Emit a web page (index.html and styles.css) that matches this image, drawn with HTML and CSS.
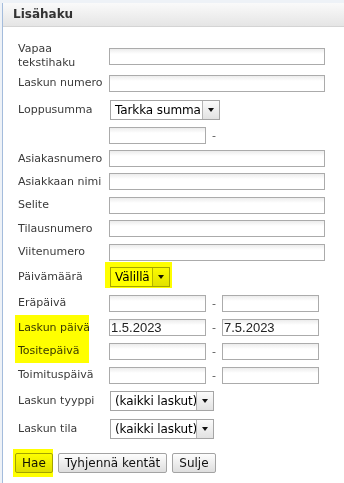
FILE: index.html
```html
<!DOCTYPE html>
<html lang="fi">
<head>
  <meta charset="UTF-8">
  <title>Lisähaku</title>
  <link rel="stylesheet" href="styles.css">
</head>
<body>

  <div class="page">
    <div class="dialog">
      <div class="dialog-title">Lisähaku</div>

      <div class="search">
        <label>Vapaa<br>tekstihaku</label>
        <div class="field"><input type="text" class="wide"></div>

        <label>Laskun numero</label>
        <div class="field"><input type="text" class="wide"></div>

        <label>Loppusumma</label>
        <div class="field"><div class="select sel-sum"><span>Tarkka summa</span><i></i></div></div>

        <span></span>
        <div class="field"><input type="text" class="short"><span class="dash">-</span></div>

        <label>Asiakasnumero</label>
        <div class="field"><input type="text" class="wide"></div>

        <label>Asiakkaan nimi</label>
        <div class="field"><input type="text" class="wide"></div>

        <label>Selite</label>
        <div class="field"><input type="text" class="wide"></div>

        <label>Tilausnumero</label>
        <div class="field"><input type="text" class="wide"></div>

        <label>Viitenumero</label>
        <div class="field"><input type="text" class="wide"></div>

        <label>Päivämäärä</label>
        <div class="field"><div class="select sel-range"><span>Välillä</span><i></i></div></div>

        <label>Eräpäivä</label>
        <div class="field"><input type="text" class="short"><span class="dash">-</span><input type="text" class="short"></div>

        <label>Laskun päivä</label>
        <div class="field"><input type="text" class="short" value="1.5.2023"><span class="dash">-</span><input type="text" class="short" value="7.5.2023"></div>

        <label>Tositepäivä</label>
        <div class="field"><input type="text" class="short"><span class="dash">-</span><input type="text" class="short"></div>

        <label>Toimituspäivä</label>
        <div class="field"><input type="text" class="short"><span class="dash">-</span><input type="text" class="short"></div>

        <label>Laskun tyyppi</label>
        <div class="field"><div class="select sel-all"><span>(kaikki laskut)</span><i></i></div></div>

        <label>Laskun tila</label>
        <div class="field"><div class="select sel-all"><span>(kaikki laskut)</span><i></i></div></div>
      </div>

      <div class="actions">
        <button>Hae</button>
        <button>Tyhjennä kentät</button>
        <button>Sulje</button>
      </div>

      <!-- marker highlights drawn over the screenshot -->
      <span class="mark mark-range"></span>
      <span class="mark mark-dates"></span>
      <span class="mark mark-search"></span>
    </div>
  </div>

</body>
</html>
```

FILE: styles.css
```css
body {
  margin: 0;
  font-family: 'DejaVu Sans', Verdana, sans-serif;
  background: #fff;
}

.page {
  height: 483px;
  overflow: hidden;
  padding: 3px 0 0 2px;
  box-sizing: border-box;
  background: #eef2f7;
}

.dialog {
  position: relative;
  height: 100%;
  background: #fff;
  border-left: 1px solid #a4bcdc;
}

.dialog-title {
  height: 23px;
  line-height: 23px;
  padding-left: 10px;
  font-size: 12px;
  font-weight: bold;
  color: #333;
  background: linear-gradient(#fafafa, #e5e5e5);
  border-bottom: 1px solid #d4d4d4;
}

.search {
  display: grid;
  grid-template-columns: 91px 1fr;
  grid-template-rows: 28px 26px 27px 24px 23px 23px 24px 23px 24px 26px 26px 23px 24px 24px 27px 29px;
  align-items: center;
  padding: 15px 0 0 15px;
}

.search label {
  font-size: 11px;
  line-height: 14px;
  color: #3a3a3a;
}

.field {
  display: flex;
  align-items: center;
}

input {
  height: 17px;
  box-sizing: border-box;
  margin: 0;
  padding: 0 1px;
  border: 1px solid #ababab;
  background: linear-gradient(#ececec, #fff 5px);
  font-family: 'Liberation Sans', Arial, sans-serif;
  font-size: 13px;
  color: #222;
}

input.wide {
  width: 216px;
}

input.short {
  width: 97px;
}

.dash {
  width: 16px;
  text-align: center;
  font-size: 11px;
  color: #555;
}

.select {
  display: flex;
  height: 20px;
  box-sizing: border-box;
  margin-left: 1px;
  border: 1px solid #a5a5a5;
  background: #fff;
  font-size: 12px;
  letter-spacing: -0.1px;
  color: #000;
}

.select span {
  flex: 1;
  padding-left: 4px;
  line-height: 18px;
  white-space: nowrap;
  overflow: hidden;
}

.select i {
  flex: none;
  width: 16px;
  border-left: 1px solid #b5b5b5;
  background: linear-gradient(#fbfbfb, #e2e2e2);
  position: relative;
}

.select i::after {
  content: "";
  position: absolute;
  left: 5px;
  top: 7px;
  border-left: 3.5px solid transparent;
  border-right: 3.5px solid transparent;
  border-top: 4px solid #111;
}

.sel-sum { width: 110px; }
.sel-range { width: 60px; }
.sel-all { width: 104px; }

.actions {
  display: flex;
  gap: 5px;
  padding: 10px 0 0 12px;
}

button {
  height: 20px;
  box-sizing: border-box;
  margin: 0;
  padding: 0 6px;
  border: 1px solid #a3a3a3;
  border-radius: 2px;
  background: linear-gradient(#fdfdfd, #dedede);
  font-family: 'DejaVu Sans', Verdana, sans-serif;
  font-size: 12px;
  color: #111;
}

.mark {
  position: absolute;
  background: #ffff00;
  mix-blend-mode: multiply;
}

.mark-range {
  left: 102px;
  top: 259px;
  width: 67px;
  height: 26px;
}

.mark-dates {
  left: 12px;
  top: 312px;
  width: 74px;
  height: 48px;
}

.mark-search {
  left: 10px;
  top: 446px;
  width: 40px;
  height: 28px;
}
```
